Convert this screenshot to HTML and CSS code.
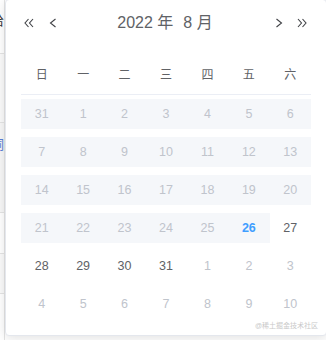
FILE: index.html
```html
<!DOCTYPE html>
<html lang="zh">
<head>
<meta charset="utf-8">
<link rel="stylesheet" href="styles.css">
</head>
<body>
<div class="page">
  <div class="side">
    <div class="side-row r1"><span class="frag">给</span></div>
    <div class="side-row r2"></div>
    <div class="side-row r3"><span class="frag blue">詞</span></div>
    <div class="side-row r4"></div>
    <div class="side-row r5"></div>
    <div class="side-row r6"></div>
  </div>

  <div class="picker">
    <div class="header">
      <div class="nav">
        <button class="btn"><svg width="12" height="12" viewBox="0 0 12 12"><polyline points="5.5,2 2,6 5.5,10" /><polyline points="10,2 6.5,6 10,10" /></svg></button>
        <button class="btn"><svg width="12" height="12" viewBox="0 0 12 12"><polyline points="8.5,2 3.5,6 8.5,10" /></svg></button>
      </div>
      <div class="label"><span class="lab">2022 年</span><span class="lab">8 月</span></div>
      <div class="nav">
        <button class="btn"><svg width="12" height="12" viewBox="0 0 12 12"><polyline points="3.5,2 8.5,6 3.5,10" /></svg></button>
        <button class="btn"><svg width="12" height="12" viewBox="0 0 12 12"><polyline points="2,2 5.5,6 2,10" /><polyline points="6.5,2 10,6 6.5,10" /></svg></button>
      </div>
    </div>
    <div class="content">
      <div class="week"><span>日</span><span>一</span><span>二</span><span>三</span><span>四</span><span>五</span><span>六</span></div>
      <div class="row"><div class="cell range gray"><span>31</span></div><div class="cell range gray"><span>1</span></div><div class="cell range gray"><span>2</span></div><div class="cell range gray"><span>3</span></div><div class="cell range gray"><span>4</span></div><div class="cell range gray"><span>5</span></div><div class="cell range gray"><span>6</span></div></div>
      <div class="row"><div class="cell range gray"><span>7</span></div><div class="cell range gray"><span>8</span></div><div class="cell range gray"><span>9</span></div><div class="cell range gray"><span>10</span></div><div class="cell range gray"><span>11</span></div><div class="cell range gray"><span>12</span></div><div class="cell range gray"><span>13</span></div></div>
      <div class="row"><div class="cell range gray"><span>14</span></div><div class="cell range gray"><span>15</span></div><div class="cell range gray"><span>16</span></div><div class="cell range gray"><span>17</span></div><div class="cell range gray"><span>18</span></div><div class="cell range gray"><span>19</span></div><div class="cell range gray"><span>20</span></div></div>
      <div class="row"><div class="cell range gray"><span>21</span></div><div class="cell range gray"><span>22</span></div><div class="cell range gray"><span>23</span></div><div class="cell range gray"><span>24</span></div><div class="cell range gray"><span>25</span></div><div class="cell range today"><span>26</span></div><div class="cell"><span>27</span></div></div>
      <div class="row"><div class="cell"><span>28</span></div><div class="cell"><span>29</span></div><div class="cell"><span>30</span></div><div class="cell"><span>31</span></div><div class="cell gray"><span>1</span></div><div class="cell gray"><span>2</span></div><div class="cell gray"><span>3</span></div></div>
      <div class="row"><div class="cell gray"><span>4</span></div><div class="cell gray"><span>5</span></div><div class="cell gray"><span>6</span></div><div class="cell gray"><span>7</span></div><div class="cell gray"><span>8</span></div><div class="cell gray"><span>9</span></div><div class="cell gray"><span>10</span></div></div>
    </div>
    <div class="watermark">@稀土掘金技术社区</div>
  </div>
</div>
</body>
</html>
```
FILE: styles.css
```css
* { box-sizing: border-box; }
html, body { margin: 0; padding: 0; }
body {
  width: 326px;
  height: 340px;
  overflow: hidden;
  background: #fff;
  font-family: "Liberation Sans", "Noto Sans CJK SC", sans-serif;
}
.page {
  position: relative;
  width: 326px;
  height: 340px;
}
.side {
  width: 5px;
  height: 340px;
  border-right: 1px solid #e4e4e4;
  display: flex;
  flex-direction: column;
}
.side-row {
  display: flex;
  justify-content: flex-end;
  align-items: center;
  overflow: hidden;
  border-bottom: 1px solid #e4e4e4;
  font-size: 13px;
  color: #333;
}
.r1 { height: 54px; align-items: flex-start; padding-top: 10px; }
.r2 { height: 69px; background: #fafafa; }
.r3 { height: 90px; background: #f7f7f7; align-items: flex-start; padding-top: 11px; }
.r4 { height: 41px; }
.r5 { height: 40px; background: #fafafa; }
.r6 { flex: 1; border-bottom: none; }
.frag { flex-shrink: 0; }
.frag.blue { color: #5a7fd6; }

.picker {
  position: absolute;
  left: 5px;
  top: -1px;
  width: 322px;
  height: 337px;
  background: #fff;
  border: 1px solid #e4e7ed;
  border-radius: 4px;
  box-shadow: 0 2px 12px 0 rgba(0, 0, 0, 0.12);
  color: #606266;
}
.header {
  margin-top: 12px;
  padding: 0 18px 0 17px;
  height: 22px;
  display: flex;
  align-items: center;
}
.nav {
  display: flex;
  gap: 11.5px;
}
.btn {
  border: 0;
  background: transparent;
  padding: 0;
  width: 12px;
  height: 12px;
  display: block;
}
.btn svg {
  display: block;
  fill: none;
  stroke: #404246;
  stroke-width: 1.1;
}
.label {
  flex: 1;
  display: flex;
  justify-content: center;
  font-size: 16px;
  line-height: 22px;
  font-weight: 400;
  color: #606266;
  padding-right: 1px;
}
.lab { padding: 0 5px; white-space: pre; }
.content {
  margin: 20px 15px 0;
}
.week {
  display: grid;
  grid-template-columns: repeat(7, 1fr);
  height: 41px;
  border-bottom: 1px solid #ebeef5;
  font-size: 12px;
  align-items: center;
  text-align: center;
  padding-bottom: 1px;
}
.row {
  display: grid;
  grid-template-columns: repeat(7, 1fr);
  height: 38px;
  padding: 4px 0;
}
.cell {
  height: 30px;
  display: flex;
  align-items: center;
  justify-content: center;
  font-size: 12.5px;
  color: #606266;
}
.cell.range { background: #f5f7fa; }
.cell.gray { color: #c0c4cc; }
.cell.today { color: #409eff; font-weight: 700; }
.watermark {
  position: absolute;
  right: 8px;
  bottom: 5px;
  font-size: 7px;
  color: #c9c9c9;
  letter-spacing: 0;
}
```
